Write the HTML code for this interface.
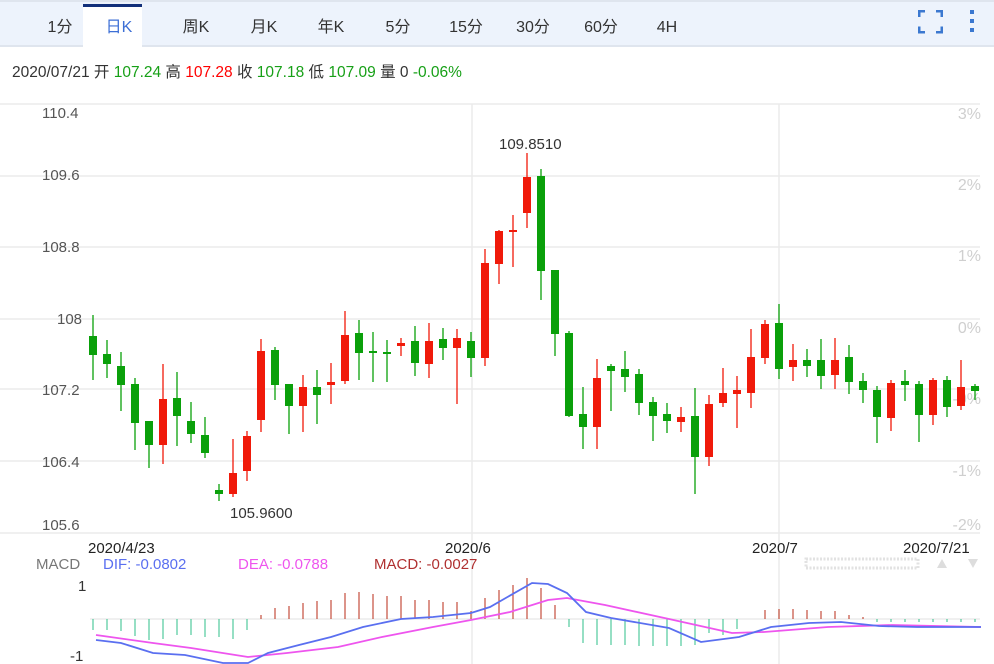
<!DOCTYPE html>
<html><head><meta charset="utf-8">
<style>
body{margin:0;width:994px;height:664px;overflow:hidden;background:#fff;font-family:"Liberation Sans","Noto Sans CJK SC",sans-serif;position:relative}
.top{position:absolute;left:0;top:0;width:994px;height:47px;background:#edf3fc;border-top:2px solid #dfe5ee;border-bottom:2px solid #dfe5ee;box-sizing:border-box}
.tab{position:absolute;top:16px;height:24px;line-height:24px;font-size:16px;color:#333;transform:translateX(-50%);white-space:nowrap}
.act{position:absolute;left:83px;top:4px;width:59px;height:43px;background:#fff;border-top:3px solid #12307a;box-sizing:border-box}
.info{position:absolute;left:12px;top:60px;font-size:15.5px;color:#333;white-space:nowrap}
.g{color:#17a017}.r{color:#f00}
svg{position:absolute;left:0;top:0}
</style></head><body>
<div class="top"></div>
<div class="act"></div>
<div class="tab" style="left:60px">1分</div>
<div class="tab" style="left:119px;color:#3d6fd6">日K</div>
<div class="tab" style="left:196px">周K</div>
<div class="tab" style="left:264px">月K</div>
<div class="tab" style="left:331px">年K</div>
<div class="tab" style="left:398px">5分</div>
<div class="tab" style="left:466px">15分</div>
<div class="tab" style="left:533px">30分</div>
<div class="tab" style="left:601px">60分</div>
<div class="tab" style="left:667px">4H</div>
<div class="info">2020/07/21 开 <span class="g">107.24</span> 高 <span class="r">107.28</span> 收 <span class="g">107.18</span> 低 <span class="g">107.09</span> 量 0 <span class="g">-0.06%</span></div>
<svg id="s" width="994" height="664" xmlns="http://www.w3.org/2000/svg" font-family="Liberation Sans, sans-serif">
<g fill="#3b78d0">
<rect x="918" y="10" width="7" height="2.5"/><rect x="918" y="10" width="2.5" height="7"/>
<rect x="936" y="10" width="7" height="2.5"/><rect x="940.5" y="10" width="2.5" height="7"/>
<rect x="918" y="31" width="7" height="2.5"/><rect x="918" y="26.5" width="2.5" height="7"/>
<rect x="936" y="31" width="7" height="2.5"/><rect x="940.5" y="26.5" width="2.5" height="7"/>
<rect x="970" y="10" width="4" height="4"/><rect x="970" y="19" width="4" height="4"/><rect x="970" y="28" width="4" height="4"/>
</g>
<g stroke="#ebebeb" stroke-width="1.5">
<line x1="0" y1="104" x2="980" y2="104"/>
<line x1="0" y1="176" x2="980" y2="176"/>
<line x1="0" y1="247" x2="980" y2="247"/>
<line x1="0" y1="319" x2="980" y2="319"/>
<line x1="0" y1="389" x2="980" y2="389"/>
<line x1="0" y1="461" x2="980" y2="461"/>
<line x1="0" y1="533" x2="980" y2="533"/>
<line x1="472" y1="104" x2="472" y2="664"/>
<line x1="779" y1="104" x2="779" y2="664"/>
<line x1="90" y1="619" x2="980" y2="619"/>
</g>
<g font-size="15" fill="#555">
<text x="42" y="118">110.4</text><text x="42" y="180">109.6</text><text x="42" y="252">108.8</text>
<text x="57" y="324">108</text><text x="42" y="395">107.2</text><text x="42" y="467">106.4</text><text x="42" y="530">105.6</text>
</g>
<g font-size="16" fill="#cfcfcf" text-anchor="end">
<text x="981" y="119">3%</text><text x="981" y="190">2%</text><text x="981" y="261">1%</text><text x="981" y="333">0%</text>
<text x="981" y="404">-0%</text><text x="981" y="476">-1%</text><text x="981" y="530">-2%</text>
</g>
<g id="c"></g>
<g font-size="15" fill="#333">
<text x="499" y="149">109.8510</text><text x="230" y="518">105.9600</text>
</g>
<g font-size="15" fill="#222">
<text x="88" y="553">2020/4/23</text><text x="445" y="553">2020/6</text><text x="752" y="553">2020/7</text><text x="903" y="553">2020/7/21</text>
</g>
<g font-size="15">
<text x="36" y="569" fill="#777">MACD</text>
<text x="103" y="569" fill="#5a6ff0">DIF: -0.0802</text>
<text x="238" y="569" fill="#ee55ee">DEA: -0.0788</text>
<text x="374" y="569" fill="#b03030">MACD: -0.0027</text>
<text x="78" y="591" fill="#333">1</text>
<text x="70" y="661" fill="#333">-1</text>
</g>
<rect x="806" y="559" width="112" height="9" fill="none" stroke="#e2e2e2" stroke-dasharray="2 1.5" stroke-width="3"/>
<polygon points="937,568 942,559 947,568" fill="#ddd"/>
<polygon points="968,559 978,559 973,568" fill="#ddd"/>
<g id="h"></g>
<polyline fill="none" stroke="#ee55ee" stroke-width="1.8" points="96,635 153,643 191,648 248,657 287,653 338,647 382,637 433,627 471,620 510,612 548,600 567,598 605,605 669,619 732,633 764,632 828,627 892,625 981,627"/>
<polyline fill="none" stroke="#5a6ff0" stroke-width="1.8" points="96,640 121,643 153,653 185,655 223,663 248,663 268,653 299,645 331,637 363,627 401,619 433,617 471,613 490,607 532,583 548,584 567,593 586,612 611,618 669,628 701,642 739,637 771,627 809,623 841,622 879,626 917,627 981,627"/>
</svg>
<script>
var C=[[315,380,336,355,0],[340,378,354,364,0],[352,411,366,385,0],[378,450,384,423,0],[421,468,421,445,0],[364,464,399,445,1],[372,446,398,416,0],[402,443,421,434,0],[417,458,435,453,0],[484,501,490,494,0],[439,497,473,494,1],[431,481,436,471,1],[339,432,351,420,1],[347,400,350,385,0],[384,434,384,406,0],[375,432,387,406,1],[370,424,387,395,0],[363,404,382,385,1],[311,384,335,381,1],[320,380,333,353,0],[332,382,351,353,0],[340,382,352,354,0],[338,356,343,346,1],[326,376,341,363,0],[323,378,341,364,1],[328,360,339,348,0],[329,404,338,348,1],[332,377,341,358,0],[249,366,263,358,1],[230,284,231,264,1],[215,267,230,231,1],[153,228,177,213,1],[169,300,176,271,0],[270,356,270,334,0],[331,417,333,416,0],[387,449,414,427,0],[359,449,378,427,1],[364,411,366,371,0],[351,392,369,377,0],[369,415,374,403,0],[397,441,402,416,0],[403,433,414,421,0],[407,432,417,422,1],[388,494,416,457,0],[395,466,404,457,1],[368,407,393,403,1],[376,428,390,394,1],[329,408,357,393,1],[320,364,324,358,1],[304,379,323,369,0],[344,381,360,367,1],[349,377,360,366,0],[339,389,360,376,0],[338,389,360,375,1],[345,394,357,382,0],[373,403,381,390,0],[386,443,390,417,0],[380,431,383,418,1],[370,401,381,385,0],[381,442,384,415,0],[378,425,380,415,1],[376,417,380,407,0],[360,410,387,406,1],[384,400,386,391,0]];
var n=C.length,s='';
for(var i=0;i<n;i++){var x=93+i*(882/(n-1)),c=C[i],col=c[4]?'#f01a0a':'#0aa00a';
s+='<line x1="'+x+'" x2="'+x+'" y1="'+c[0]+'" y2="'+c[1]+'" stroke="'+col+'" stroke-width="1.3"/>';
var h=Math.max(c[3]-c[2],2);s+='<rect x="'+(x-4)+'" y="'+c[2]+'" width="8" height="'+h+'" fill="'+col+'"/>';}
document.getElementById('c').innerHTML=s;
var H=[-11,-11,-12,-17,-21,-20,-16,-16,-18,-18,-20,-11,4,11,13,16,18,19,26,27,25,23,23,19,19,17,17,8,21,29,34,41,31,14,-8,-24,-26,-26,-26,-27,-27,-27,-27,-26,-14,-16,-10,0,9,10,10,9,8,8,4,2,-3,-3,-3,-3,-3,-3,-3,-3,-3];
var t='';for(var i=0;i<n;i++){var x=93+i*(882/(n-1)),v=H[i];if(!v)continue;
t+='<line x1="'+x+'" x2="'+x+'" y1="619" y2="'+(619-v)+'" stroke="'+(v>0?'#b82a14':'#2cbf88')+'" stroke-width="1"/>';}
document.getElementById('h').innerHTML=t;
</script>
</body></html>
